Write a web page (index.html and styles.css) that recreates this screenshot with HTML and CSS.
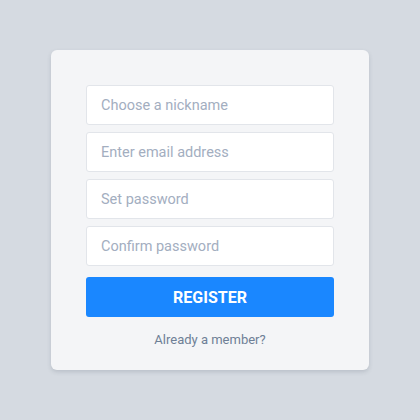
FILE: index.html
```html
<!DOCTYPE html>
<html>
<head>
<meta charset="utf-8">
<link rel="stylesheet" href="styles.css">
</head>
<body>
<div class="page">
  <form class="card">
    <input class="field" type="text" placeholder="Choose a nickname">
    <input class="field" type="text" placeholder="Enter email address">
    <input class="field" type="password" placeholder="Set password">
    <input class="field" type="password" placeholder="Confirm password">
    <button class="btn" type="button">REGISTER</button>
    <a class="link">Already a member?</a>
  </form>
</div>
</body>
</html>
```
FILE: styles.css
```css
html, body {
  margin: 0;
  padding: 0;
  background: #d5dae1;
  font-family: Roboto, "Liberation Sans", sans-serif;
}
.page {
  width: 420px;
  height: 420px;
  display: flex;
  align-items: center;
  justify-content: center;
}
.card {
  box-sizing: border-box;
  width: 318px;
  height: 320px;
  background: #f4f5f7;
  border-radius: 6px;
  box-shadow: 0 2px 4px rgba(60, 70, 90, 0.18);
  padding: 35px;
  display: flex;
  flex-direction: column;
  gap: 7px;
  margin: 0;
}
.field {
  flex: none;
  box-sizing: border-box;
  height: 40px;
  width: 248px;
  border: 1px solid #e2e5ea;
  border-radius: 3px;
  background: #fff;
  padding: 0 14px;
  font-family: inherit;
  font-size: 14.5px;
  color: #333;
  outline: none;
}
.field::placeholder {
  color: #a3aebf;
}
.btn {
  flex: none;
  box-sizing: border-box;
  margin-top: 4px;
  height: 40px;
  width: 248px;
  border: none;
  border-radius: 3px;
  background: #1a87ff;
  color: #fff;
  font-family: inherit;
  font-weight: 700;
  font-size: 16px;
  letter-spacing: 0;
}
.link {
  flex: none;
  margin-top: 8px;
  text-align: center;
  font-size: 13px;
  color: #6e7f96;
}
```
